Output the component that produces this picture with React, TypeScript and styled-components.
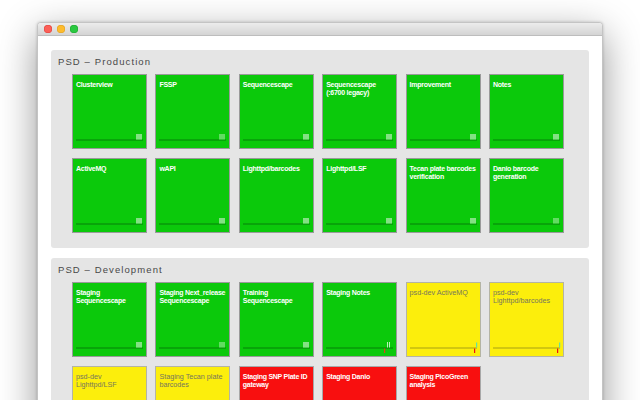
import React from "react";
import styled, { createGlobalStyle } from "styled-components";

type Status = "ok" | "warn" | "bad";
type Mark = "stripes" | "solid" | "ticks" | "alert" | "none";

interface ITile {
  name: string;
  status: Status;
  mark: Mark;
}

const GlobalStyle = createGlobalStyle`
  html, body {
    margin: 0;
    padding: 0;
    background: #ffffff;
    overflow: hidden;
  }
  body {
    font-family: "Liberation Sans", Arial, sans-serif;
  }
`;

const Page = styled.div`
  width: 640px;
  height: 400px;
  padding: 22px 0 0 37px;
  box-sizing: border-box;
  overflow: hidden;
`;

const Window = styled.div`
  width: 566px;
  height: 480px;
  background: #ffffff;
  border: 1px solid #c4c4c4;
  border-radius: 4px 4px 0 0;
  box-sizing: border-box;
  box-shadow: 0 12px 38px rgba(0, 0, 0, 0.42), 0 0 3px rgba(0, 0, 0, 0.2);
  display: flex;
  flex-direction: column;
`;

const TitleBar = styled.div`
  height: 12px;
  background: linear-gradient(#ececec, #d4d4d4);
  border-bottom: 1px solid #bdbdbd;
  border-radius: 3px 3px 0 0;
  display: flex;
  align-items: center;
  gap: 5px;
  padding-left: 6px;
`;

const Light = styled.span<{ $color: string; $edge: string }>`
  width: 8px;
  height: 8px;
  border-radius: 50%;
  background: ${(p) => p.$color};
  box-shadow: inset 0 0 0 0.5px ${(p) => p.$edge};
`;

const Content = styled.div`
  padding: 14px 13px 0 13px;
  display: flex;
  flex-direction: column;
  gap: 10px;
`;

const Panel = styled.section`
  width: 538px;
  box-sizing: border-box;
  background: #e5e5e5;
  border-radius: 3px;
  padding: 6px 0 15px 7px;
`;

const PanelTitle = styled.h2`
  margin: 0 0 6px;
  font-size: 9.5px;
  line-height: 12px;
  font-weight: normal;
  letter-spacing: 1.1px;
  color: #484848;
`;

const Grid = styled.div`
  margin-left: 14px;
  display: grid;
  grid-template-columns: repeat(6, 75px);
  column-gap: 8.4px;
  row-gap: 9px;
`;

const palette: Record<Status, { bg: string; fg: string; line: string; edge: string }> = {
  ok: { bg: "#0bc90b", fg: "#ffffff", line: "#07800a", edge: "#9a9a9a" },
  warn: { bg: "#fcee0c", fg: "#76765e", line: "#a89f12", edge: "#b4b4a4" },
  bad: { bg: "#f80f0f", fg: "#ffffff", line: "#a00808", edge: "#a8a8a8" },
};

const Tile = styled.div<{ $status: Status }>`
  width: 75px;
  height: 75px;
  box-sizing: border-box;
  border: 1px solid ${(p) => palette[p.$status].edge};
  background: ${(p) => palette[p.$status].bg};
  display: flex;
  flex-direction: column;
  padding: 6px 0 2px 3px;
`;

const TileName = styled.div<{ $status: Status }>`
  font-size: ${(p) => (p.$status === "warn" ? "7.2px" : "7px")};
  line-height: 7.6px;
  font-weight: ${(p) => (p.$status === "warn" ? "normal" : "bold")};
  letter-spacing: ${(p) => (p.$status === "warn" ? "0" : "-0.25px")};
  padding-right: ${(p) => (p.$status === "warn" ? "3px" : "0")};
  color: ${(p) => palette[p.$status].fg};
`;

const Spark = styled.svg`
  margin-top: auto;
  display: block;
`;

function Sparkline({ status, mark }: { status: Status; mark: Mark }) {
  const line = palette[status].line;
  return (
    <Spark width="68" height="14" viewBox="0 0 68 14">
      <rect x="0" y="7.5" width="67" height="1" fill={line} />
      {mark === "solid" && (
        <rect x="60" y="2" width="6" height="5.5" fill="#62dc62" />
      )}
      {mark === "stripes" && (
        <g>
          <rect x="60" y="2" width="6" height="5.5" fill="#4fd34f" />
          <rect x="60.5" y="2" width="1" height="5.5" fill="#b9f0b9" />
          <rect x="62.5" y="2" width="1" height="5.5" fill="#b9f0b9" />
          <rect x="64.5" y="2" width="1" height="5.5" fill="#b9f0b9" />
        </g>
      )}
      {mark === "alert" && (
        <g>
          <rect x="61" y="2" width="1" height="5.5" fill="#b9f0b9" />
          <rect x="63" y="2" width="1" height="5.5" fill="#b9f0b9" />
          <rect x="58" y="8.5" width="1.2" height="4.5" fill="#e0401a" />
        </g>
      )}
      {mark === "ticks" && (
        <g>
          <rect x="64" y="8.5" width="1.2" height="4.5" fill="#f01010" />
          <rect x="66" y="2.5" width="1.2" height="5" fill="#5fe0a8" />
        </g>
      )}
    </Spark>
  );
}

const production: ITile[] = [
  { name: "Clusterview", status: "ok", mark: "stripes" },
  { name: "FSSP", status: "ok", mark: "solid" },
  { name: "Sequencescape", status: "ok", mark: "stripes" },
  { name: "Sequencescape (:6700 legacy)", status: "ok", mark: "stripes" },
  { name: "Improvement", status: "ok", mark: "stripes" },
  { name: "Notes", status: "ok", mark: "stripes" },
  { name: "ActiveMQ", status: "ok", mark: "stripes" },
  { name: "wAPI", status: "ok", mark: "stripes" },
  { name: "Lighttpd/barcodes", status: "ok", mark: "stripes" },
  { name: "Lighttpd/LSF", status: "ok", mark: "stripes" },
  { name: "Tecan plate barcodes verification", status: "ok", mark: "stripes" },
  { name: "Danio barcode generation", status: "ok", mark: "solid" },
];

const development: ITile[] = [
  { name: "Staging Sequencescape", status: "ok", mark: "stripes" },
  { name: "Staging Next_release Sequencescape", status: "ok", mark: "solid" },
  { name: "Training Sequencescape", status: "ok", mark: "stripes" },
  { name: "Staging Notes", status: "ok", mark: "alert" },
  { name: "psd-dev ActiveMQ", status: "warn", mark: "ticks" },
  { name: "psd-dev Lighttpd/barcodes", status: "warn", mark: "ticks" },
  { name: "psd-dev Lighttpd/LSF", status: "warn", mark: "none" },
  { name: "Staging Tecan plate barcodes", status: "warn", mark: "none" },
  { name: "Staging SNP Plate ID gateway", status: "bad", mark: "none" },
  { name: "Staging Danio", status: "bad", mark: "none" },
  { name: "Staging PicoGreen analysis", status: "bad", mark: "none" },
];

function Group({ title, tiles }: { title: string; tiles: ITile[] }) {
  return (
    <Panel>
      <PanelTitle>{title}</PanelTitle>
      <Grid>
        {tiles.map((tile) => (
          <Tile key={tile.name} $status={tile.status}>
            <TileName $status={tile.status}>{tile.name}</TileName>
            <Sparkline status={tile.status} mark={tile.mark} />
          </Tile>
        ))}
      </Grid>
    </Panel>
  );
}

export default function App() {
  return (
    <>
      <GlobalStyle />
      <Page>
        <Window>
          <TitleBar>
            <Light $color="#fc5f57" $edge="#de3f39" />
            <Light $color="#fdbc2e" $edge="#dd9e22" />
            <Light $color="#2ac840" $edge="#1aa52d" />
          </TitleBar>
          <Content>
            <Group title="PSD – Production" tiles={production} />
            <Group title="PSD – Development" tiles={development} />
          </Content>
        </Window>
      </Page>
    </>
  );
}
